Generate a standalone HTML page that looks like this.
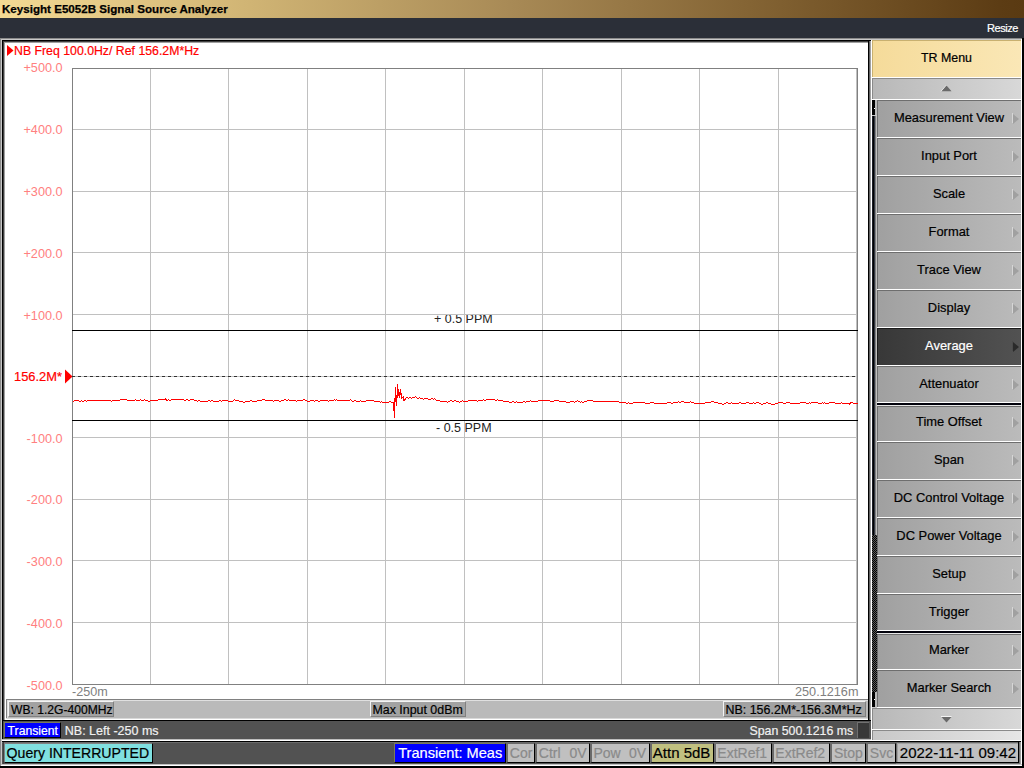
<!DOCTYPE html>
<html><head><meta charset="utf-8">
<style>
*{margin:0;padding:0;box-sizing:border-box}
html,body{width:1024px;height:768px;overflow:hidden;background:#000}
body{position:relative;font-family:"Liberation Sans",sans-serif}
.a{position:absolute}
.t{position:absolute;white-space:pre;line-height:1;font-family:"Liberation Sans",sans-serif;-webkit-text-stroke:0.2px currentColor}
</style></head><body>
<div class="a" style="left:0px;top:0px;width:1024px;height:18px;background:linear-gradient(to right,#f4da94 0%,#d0b474 24.4%,#a88a56 49.8%,#846434 73.2%,#5c3c14 97.6%,#5a3a12 100%);"></div><div class="t" style="left:2px;top:3px;font-size:11.6px;color:#000;font-weight:bold;-webkit-text-stroke:0.25px #000">Keysight E5052B Signal Source Analyzer</div><div class="a" style="left:0px;top:18px;width:1024px;height:20px;background:#2b2f38;"></div><div class="t" style="left:987px;top:23px;font-size:11px;color:#fff;letter-spacing:-0.45px">Resize</div><div class="a" style="left:0px;top:38px;width:1024px;height:730px;background:#000;"></div><div class="a" style="left:0px;top:38px;width:1px;height:728px;background:#8a8a8a;"></div><div class="a" style="left:1px;top:39px;width:1px;height:727px;background:#c8c8c8;"></div><div class="a" style="left:0px;top:38px;width:1022px;height:1px;background:#8a8a8a;"></div><div class="a" style="left:1px;top:39px;width:1021px;height:1px;background:#c8c8c8;"></div><div class="a" style="left:1021px;top:39px;width:1px;height:727px;background:#fff;"></div><div class="a" style="left:1px;top:765px;width:1021px;height:1px;background:#fff;"></div><div class="a" style="left:1px;top:764px;width:1021px;height:1px;background:#c0c0c0;"></div><div class="a" style="left:2px;top:40px;width:867px;height:681px;background:#000;"></div><div class="a" style="left:3px;top:41px;width:866px;height:680px;background:#404040;"></div><div class="a" style="left:4px;top:42px;width:865px;height:679px;background:#a0a0a0;"></div><div class="a" style="left:869px;top:41px;width:1px;height:680px;background:#606060;"></div><div class="a" style="left:870px;top:41px;width:1px;height:680px;background:#a0a0a0;"></div><div class="a" style="left:871px;top:40px;width:1px;height:700px;background:#fff;"></div><div class="a" style="left:5px;top:43px;width:863px;height:677px;background:#fff;"></div><div class="a" style="left:6px;top:699px;width:862px;height:21px;background:#bababa;border-top:1px solid #808080;border-left:1px solid #808080"></div><div class="a" style="left:6px;top:718px;width:862px;height:1px;background:#d8d8d8;"></div><div class="a" style="left:6px;top:719px;width:862px;height:1px;background:#fff;"></div><div class="a" style="left:7px;top:700px;width:861px;height:1px;background:#e0e0e0;"></div><div class="a" style="left:7px;top:700px;width:1px;height:18px;background:#e0e0e0;"></div><div class="a" style="left:8px;top:701px;width:106px;height:16px;background:#a2a2a2;border-top:1px solid #f4f4f4;border-left:1px solid #f4f4f4;border-right:1px solid #808080;border-bottom:1px solid #808080"></div><div class="t" style="left:11px;top:704px;font-size:12.1px;color:#000;">WB: 1.2G-400MHz</div><div class="a" style="left:370px;top:701px;width:96px;height:16px;background:#a2a2a2;border-top:1px solid #f4f4f4;border-left:1px solid #f4f4f4;border-right:1px solid #808080;border-bottom:1px solid #808080"></div><div class="t" style="left:372.5px;top:704px;font-size:12.4px;color:#000;">Max Input 0dBm</div><div class="a" style="left:723px;top:701px;width:143px;height:16px;background:#a2a2a2;border-top:1px solid #f4f4f4;border-left:1px solid #f4f4f4;border-right:1px solid #808080;border-bottom:1px solid #808080"></div><div class="t" style="left:725.5px;top:704px;font-size:12.45px;color:#000;">NB: 156.2M*-156.3M*Hz</div><div class="a" style="left:2px;top:720px;width:869px;height:1px;background:#000;"></div><div class="a" style="left:2px;top:721px;width:869px;height:19px;background:#525252;"></div><div class="a" style="left:2px;top:739px;width:869px;height:1px;background:#bdbdbd;"></div><div class="a" style="left:2px;top:740px;width:1019px;height:1px;background:#fff;"></div><div class="a" style="left:4px;top:722px;width:57px;height:16px;background:#0000ff;border-top:1px solid #7a7a5a;border-left:1px solid #7a7a5a;border-right:1px solid #000;border-bottom:1px solid #000"></div><div class="t" style="left:7.6px;top:725px;font-size:12.2px;color:#fff;">Transient</div><div class="t" style="left:64.8px;top:725px;font-size:12.5px;color:#f0f0f0;">NB: Left -250 ms</div><div class="t" style="left:749.5px;top:725px;font-size:12.35px;color:#f0f0f0;">Span 500.1216 ms</div><div class="a" style="left:857px;top:722px;width:12px;height:16px;background:#383838;border-top:1px solid #707070;border-left:1px solid #707070"></div><div class="a" style="left:2px;top:741px;width:1019px;height:1px;background:#000;"></div><div class="a" style="left:2px;top:742px;width:1019px;height:22px;background:#525252;"></div><div class="a" style="left:2px;top:742px;width:1019px;height:1px;background:#6a6a6a;"></div><div class="a" style="left:3px;top:742px;width:1px;height:22px;background:#404040;"></div><div class="a" style="left:4px;top:743px;width:149px;height:20px;background:#80e0e0;border-top:1px solid #808080;border-left:1px solid #808080;border-right:1px solid #000;border-bottom:1px solid #000"></div><div class="t" style="left:6.6px;top:746px;font-size:14.1px;color:#000;">Query INTERRUPTED</div><div class="a" style="left:394px;top:743px;width:112px;height:20px;background:#0000ff;border-top:1px solid #7a7a5a;border-left:1px solid #7a7a5a;border-right:1px solid #000;border-bottom:1px solid #000"></div><div class="t" style="left:398.2px;top:746px;font-size:14.6px;color:#fff;">Transient: Meas</div><div class="a" style="left:506px;top:743px;width:29px;height:20px;background:#c0c0c0;border-top:1px solid #6a6a6a;border-left:2px solid #6a6a6a;border-right:1px solid #000;border-bottom:1px solid #000"></div><div class="t" style="left:509.8px;top:746px;font-size:14px;color:#8a8a8a;">Cor</div><div class="a" style="left:535px;top:743px;width:55px;height:20px;background:#c0c0c0;border-top:1px solid #6a6a6a;border-left:2px solid #6a6a6a;border-right:1px solid #000;border-bottom:1px solid #000"></div><div class="t" style="left:538.8px;top:746px;font-size:14px;color:#8a8a8a;">Ctrl</div><div class="t" style="left:569.5px;top:746px;font-size:14px;color:#8a8a8a;">0V</div><div class="a" style="left:590px;top:743px;width:60px;height:20px;background:#c0c0c0;border-top:1px solid #6a6a6a;border-left:2px solid #6a6a6a;border-right:1px solid #000;border-bottom:1px solid #000"></div><div class="t" style="left:593.5px;top:746px;font-size:14px;color:#8a8a8a;">Pow</div><div class="t" style="left:629px;top:746px;font-size:14px;color:#8a8a8a;">0V</div><div class="a" style="left:650px;top:743px;width:64px;height:20px;background:#c0c080;border-top:1px solid #6a6a6a;border-left:2px solid #6a6a6a;border-right:1px solid #000;border-bottom:1px solid #000"></div><div class="t" style="left:652.8px;top:745px;font-size:15px;color:#000;">Attn 5dB</div><div class="a" style="left:714px;top:743px;width:58px;height:20px;background:#c0c0c0;border-top:1px solid #6a6a6a;border-left:2px solid #6a6a6a;border-right:1px solid #000;border-bottom:1px solid #000"></div><div class="t" style="left:717.3px;top:746px;font-size:14px;color:#8a8a8a;">ExtRef1</div><div class="a" style="left:772px;top:743px;width:58px;height:20px;background:#c0c0c0;border-top:1px solid #6a6a6a;border-left:2px solid #6a6a6a;border-right:1px solid #000;border-bottom:1px solid #000"></div><div class="t" style="left:775.3px;top:746px;font-size:14px;color:#8a8a8a;">ExtRef2</div><div class="a" style="left:830px;top:743px;width:36px;height:20px;background:#c0c0c0;border-top:1px solid #6a6a6a;border-left:2px solid #6a6a6a;border-right:1px solid #000;border-bottom:1px solid #000"></div><div class="t" style="left:834px;top:746px;font-size:14px;color:#8a8a8a;">Stop</div><div class="a" style="left:866px;top:743px;width:30px;height:20px;background:#c0c0c0;border-top:1px solid #6a6a6a;border-left:2px solid #6a6a6a;border-right:1px solid #000;border-bottom:1px solid #000"></div><div class="t" style="left:869.8px;top:746px;font-size:14px;color:#8a8a8a;">Svc</div><div class="a" style="left:896px;top:742px;width:125px;height:22px;background:#a0a0a0;"></div><div class="a" style="left:896px;top:742px;width:122px;height:1px;background:#6a6a6a;"></div><div class="a" style="left:896px;top:742px;width:1px;height:21px;background:#6a6a6a;"></div><div class="a" style="left:898px;top:744px;width:120px;height:18px;background:#c0c0c0;"></div><div class="a" style="left:1018px;top:742px;width:1px;height:21px;background:#000;"></div><div class="a" style="left:1019px;top:742px;width:1px;height:22px;background:#707070;"></div><div class="a" style="left:896px;top:762px;width:123px;height:1px;background:#000;"></div><div class="a" style="left:896px;top:763px;width:124px;height:1px;background:#707070;"></div><div class="t" style="left:899.8px;top:745px;font-size:15px;color:#000;">2022-11-11 09:42</div><div class="a" style="left:2px;top:40px;width:1px;height:699px;background:#000;"></div><div class="a" style="left:868px;top:40px;width:1px;height:681px;background:#000;"></div><div class="a" style="left:872px;top:40px;width:149px;height:700px;background:#c8c8c8;"></div><div class="a" style="left:872px;top:40px;width:149px;height:37px;background:linear-gradient(to right,#f5db9a,#fae7b6);border-top:1px solid #c8b070;border-left:1px solid #c8b070"></div><div class="t" style="left:921px;top:52px;font-size:12.4px;color:#000;">TR Menu</div><div class="a" style="left:872px;top:77px;width:149px;height:1px;background:#fff;"></div><div class="a" style="left:872px;top:78px;width:149px;height:21px;background:linear-gradient(to right,#b8b8b8,#d8d8d8);border-top:1px solid #8a8a8a;border-left:1px solid #8a8a8a"></div><svg class="a" style="left:0;top:0" width="1024" height="100"><polyline points="941,91.3 946.5,85.2" stroke="#f4f4f4" stroke-width="1" fill="none"/><polygon points="941.5,91.3 946.5,85.6 951.5,91.3" fill="#6a6a6a"/></svg><div class="a" style="left:872px;top:99px;width:149px;height:1px;background:#fff;"></div><div class="a" style="left:872px;top:100px;width:5px;height:607px;background:#c0c0c0;"></div><div class="a" style="left:872px;top:100px;width:3px;height:15px;background:#000;"></div><div class="a" style="left:875px;top:100px;width:2px;height:15px;background:#b8b8b8;"></div><div class="a" style="left:874px;top:108px;width:1px;height:1px;background:#fff;"></div><div class="a" style="left:872px;top:115px;width:5px;height:1px;background:#c8c8c8;"></div><div class="a" style="left:872px;top:116px;width:1px;height:419px;background:#1a1d28;"></div><div class="a" style="left:873px;top:116px;width:1px;height:419px;background:#000;"></div><div class="a" style="left:874px;top:116px;width:1px;height:419px;background:#303540;"></div><div class="a" style="left:875px;top:116px;width:1px;height:419px;background:#808080;"></div><div class="a" style="left:876px;top:116px;width:1px;height:419px;background:#c0c0c0;"></div><div class="a" style="left:872px;top:535px;width:5px;height:157px;background:repeating-conic-gradient(#000 0 25%,#5a5a5a 0 50%) 0 0/2px 2px;"></div><div class="a" style="left:872px;top:692px;width:3px;height:15px;background:#000;"></div><div class="a" style="left:875px;top:692px;width:2px;height:15px;background:#b8b8b8;"></div><div class="a" style="left:874px;top:699px;width:1px;height:1px;background:#fff;"></div><div class="a" style="left:877px;top:100px;width:144px;height:37px;background:linear-gradient(to right,#a0a0a0,#bbbbbb);border-top:1px solid #6e6e6e;border-left:1px solid #6e6e6e"></div><div class="a" style="left:877px;top:137px;width:144px;height:1px;background:#fff;"></div><div class="t" style="left:878px;top:112px;width:142px;text-align:center;font-size:12.9px;color:#000">Measurement View</div><svg class="a" style="left:1000px;top:100px" width="24" height="38"><line x1="12.5" y1="13" x2="12.5" y2="23" stroke="#d6d6d6"/><polygon points="13,14 19,19 13,24" fill="#a0a0a0"/></svg><div class="a" style="left:877px;top:138px;width:144px;height:37px;background:linear-gradient(to right,#a0a0a0,#bbbbbb);border-top:1px solid #6e6e6e;border-left:1px solid #6e6e6e"></div><div class="a" style="left:877px;top:175px;width:144px;height:1px;background:#fff;"></div><div class="t" style="left:878px;top:150px;width:142px;text-align:center;font-size:12.9px;color:#000">Input Port</div><svg class="a" style="left:1000px;top:138px" width="24" height="38"><line x1="12.5" y1="13" x2="12.5" y2="23" stroke="#d6d6d6"/><polygon points="13,14 19,19 13,24" fill="#a0a0a0"/></svg><div class="a" style="left:877px;top:176px;width:144px;height:37px;background:linear-gradient(to right,#a0a0a0,#bbbbbb);border-top:1px solid #6e6e6e;border-left:1px solid #6e6e6e"></div><div class="a" style="left:877px;top:213px;width:144px;height:1px;background:#fff;"></div><div class="t" style="left:878px;top:188px;width:142px;text-align:center;font-size:12.9px;color:#000">Scale</div><svg class="a" style="left:1000px;top:176px" width="24" height="38"><line x1="12.5" y1="13" x2="12.5" y2="23" stroke="#d6d6d6"/><polygon points="13,14 19,19 13,24" fill="#a0a0a0"/></svg><div class="a" style="left:877px;top:214px;width:144px;height:37px;background:linear-gradient(to right,#a0a0a0,#bbbbbb);border-top:1px solid #6e6e6e;border-left:1px solid #6e6e6e"></div><div class="a" style="left:877px;top:251px;width:144px;height:1px;background:#fff;"></div><div class="t" style="left:878px;top:226px;width:142px;text-align:center;font-size:12.9px;color:#000">Format</div><svg class="a" style="left:1000px;top:214px" width="24" height="38"><line x1="12.5" y1="13" x2="12.5" y2="23" stroke="#d6d6d6"/><polygon points="13,14 19,19 13,24" fill="#a0a0a0"/></svg><div class="a" style="left:877px;top:252px;width:144px;height:37px;background:linear-gradient(to right,#a0a0a0,#bbbbbb);border-top:1px solid #6e6e6e;border-left:1px solid #6e6e6e"></div><div class="a" style="left:877px;top:289px;width:144px;height:1px;background:#fff;"></div><div class="t" style="left:878px;top:264px;width:142px;text-align:center;font-size:12.9px;color:#000">Trace View</div><svg class="a" style="left:1000px;top:252px" width="24" height="38"><line x1="12.5" y1="13" x2="12.5" y2="23" stroke="#d6d6d6"/><polygon points="13,14 19,19 13,24" fill="#a0a0a0"/></svg><div class="a" style="left:877px;top:290px;width:144px;height:37px;background:linear-gradient(to right,#a0a0a0,#bbbbbb);border-top:1px solid #6e6e6e;border-left:1px solid #6e6e6e"></div><div class="a" style="left:877px;top:327px;width:144px;height:1px;background:#fff;"></div><div class="t" style="left:878px;top:302px;width:142px;text-align:center;font-size:12.9px;color:#000">Display</div><svg class="a" style="left:1000px;top:290px" width="24" height="38"><line x1="12.5" y1="13" x2="12.5" y2="23" stroke="#d6d6d6"/><polygon points="13,14 19,19 13,24" fill="#a0a0a0"/></svg><div class="a" style="left:877px;top:328px;width:144px;height:37px;background:linear-gradient(to right,#383838,#525252);border-top:1px solid #1a1a1a;border-left:1px solid #1a1a1a"></div><div class="a" style="left:877px;top:365px;width:144px;height:1px;background:#fff;"></div><div class="t" style="left:878px;top:340px;width:142px;text-align:center;font-size:12.9px;color:#fff">Average</div><svg class="a" style="left:1000px;top:328px" width="24" height="38"><line x1="12.5" y1="13" x2="12.5" y2="23" stroke="#4a4a4a"/><polygon points="13,14 19,19 13,24" fill="#2a2a2a"/></svg><div class="a" style="left:877px;top:366px;width:144px;height:37px;background:linear-gradient(to right,#a0a0a0,#bbbbbb);border-top:1px solid #6e6e6e;border-left:1px solid #6e6e6e"></div><div class="a" style="left:877px;top:403px;width:144px;height:1px;background:#fff;"></div><div class="t" style="left:878px;top:378px;width:142px;text-align:center;font-size:12.9px;color:#000">Attenuator</div><svg class="a" style="left:1000px;top:366px" width="24" height="38"><line x1="12.5" y1="13" x2="12.5" y2="23" stroke="#d6d6d6"/><polygon points="13,14 19,19 13,24" fill="#a0a0a0"/></svg><div class="a" style="left:877px;top:404px;width:144px;height:37px;background:linear-gradient(to right,#a0a0a0,#bbbbbb);border-top:1px solid #6e6e6e;border-left:1px solid #6e6e6e"></div><div class="a" style="left:877px;top:441px;width:144px;height:1px;background:#fff;"></div><div class="t" style="left:878px;top:416px;width:142px;text-align:center;font-size:12.9px;color:#000">Time Offset</div><svg class="a" style="left:1000px;top:404px" width="24" height="38"><line x1="12.5" y1="13" x2="12.5" y2="23" stroke="#d6d6d6"/><polygon points="13,14 19,19 13,24" fill="#a0a0a0"/></svg><div class="a" style="left:877px;top:442px;width:144px;height:37px;background:linear-gradient(to right,#a0a0a0,#bbbbbb);border-top:1px solid #6e6e6e;border-left:1px solid #6e6e6e"></div><div class="a" style="left:877px;top:479px;width:144px;height:1px;background:#fff;"></div><div class="t" style="left:878px;top:454px;width:142px;text-align:center;font-size:12.9px;color:#000">Span</div><svg class="a" style="left:1000px;top:442px" width="24" height="38"><line x1="12.5" y1="13" x2="12.5" y2="23" stroke="#d6d6d6"/><polygon points="13,14 19,19 13,24" fill="#a0a0a0"/></svg><div class="a" style="left:877px;top:480px;width:144px;height:37px;background:linear-gradient(to right,#a0a0a0,#bbbbbb);border-top:1px solid #6e6e6e;border-left:1px solid #6e6e6e"></div><div class="a" style="left:877px;top:517px;width:144px;height:1px;background:#fff;"></div><div class="t" style="left:878px;top:492px;width:142px;text-align:center;font-size:12.9px;color:#000">DC Control Voltage</div><svg class="a" style="left:1000px;top:480px" width="24" height="38"><line x1="12.5" y1="13" x2="12.5" y2="23" stroke="#d6d6d6"/><polygon points="13,14 19,19 13,24" fill="#a0a0a0"/></svg><div class="a" style="left:877px;top:518px;width:144px;height:37px;background:linear-gradient(to right,#a0a0a0,#bbbbbb);border-top:1px solid #6e6e6e;border-left:1px solid #6e6e6e"></div><div class="a" style="left:877px;top:555px;width:144px;height:1px;background:#fff;"></div><div class="t" style="left:878px;top:530px;width:142px;text-align:center;font-size:12.9px;color:#000">DC Power Voltage</div><svg class="a" style="left:1000px;top:518px" width="24" height="38"><line x1="12.5" y1="13" x2="12.5" y2="23" stroke="#d6d6d6"/><polygon points="13,14 19,19 13,24" fill="#a0a0a0"/></svg><div class="a" style="left:877px;top:556px;width:144px;height:37px;background:linear-gradient(to right,#a0a0a0,#bbbbbb);border-top:1px solid #6e6e6e;border-left:1px solid #6e6e6e"></div><div class="a" style="left:877px;top:593px;width:144px;height:1px;background:#fff;"></div><div class="t" style="left:878px;top:568px;width:142px;text-align:center;font-size:12.9px;color:#000">Setup</div><svg class="a" style="left:1000px;top:556px" width="24" height="38"><line x1="12.5" y1="13" x2="12.5" y2="23" stroke="#d6d6d6"/><polygon points="13,14 19,19 13,24" fill="#a0a0a0"/></svg><div class="a" style="left:877px;top:594px;width:144px;height:37px;background:linear-gradient(to right,#a0a0a0,#bbbbbb);border-top:1px solid #6e6e6e;border-left:1px solid #6e6e6e"></div><div class="a" style="left:877px;top:631px;width:144px;height:1px;background:#fff;"></div><div class="t" style="left:878px;top:606px;width:142px;text-align:center;font-size:12.9px;color:#000">Trigger</div><svg class="a" style="left:1000px;top:594px" width="24" height="38"><line x1="12.5" y1="13" x2="12.5" y2="23" stroke="#d6d6d6"/><polygon points="13,14 19,19 13,24" fill="#a0a0a0"/></svg><div class="a" style="left:877px;top:632px;width:144px;height:37px;background:linear-gradient(to right,#a0a0a0,#bbbbbb);border-top:1px solid #6e6e6e;border-left:1px solid #6e6e6e"></div><div class="a" style="left:877px;top:669px;width:144px;height:1px;background:#fff;"></div><div class="t" style="left:878px;top:644px;width:142px;text-align:center;font-size:12.9px;color:#000">Marker</div><svg class="a" style="left:1000px;top:632px" width="24" height="38"><line x1="12.5" y1="13" x2="12.5" y2="23" stroke="#d6d6d6"/><polygon points="13,14 19,19 13,24" fill="#a0a0a0"/></svg><div class="a" style="left:877px;top:670px;width:144px;height:37px;background:linear-gradient(to right,#a0a0a0,#bbbbbb);border-top:1px solid #6e6e6e;border-left:1px solid #6e6e6e"></div><div class="a" style="left:877px;top:707px;width:144px;height:1px;background:#fff;"></div><div class="t" style="left:878px;top:682px;width:142px;text-align:center;font-size:12.9px;color:#000">Marker Search</div><svg class="a" style="left:1000px;top:670px" width="24" height="38"><line x1="12.5" y1="13" x2="12.5" y2="23" stroke="#d6d6d6"/><polygon points="13,14 19,19 13,24" fill="#a0a0a0"/></svg><div class="a" style="left:877px;top:402px;width:144px;height:1px;background:#fff;"></div><div class="a" style="left:877px;top:403px;width:144px;height:2px;background:#02020c;"></div><div class="a" style="left:877px;top:405px;width:144px;height:1px;background:#e8e8e8;"></div><div class="a" style="left:877px;top:406px;width:144px;height:1px;background:#6e6e6e;"></div><div class="a" style="left:877px;top:630px;width:144px;height:1px;background:#fff;"></div><div class="a" style="left:877px;top:631px;width:144px;height:2px;background:#02020c;"></div><div class="a" style="left:877px;top:633px;width:144px;height:1px;background:#e8e8e8;"></div><div class="a" style="left:877px;top:634px;width:144px;height:1px;background:#6e6e6e;"></div><div class="a" style="left:872px;top:708px;width:149px;height:21px;background:linear-gradient(to right,#b8b8b8,#d8d8d8);border-top:1px solid #8a8a8a;border-left:1px solid #8a8a8a"></div><svg class="a" style="left:0;top:700px" width="1024" height="40"><line x1="941" y1="16.5" x2="951.5" y2="16.5" stroke="#f4f4f4" stroke-width="1"/><polygon points="941.5,17 946.5,22.6 951.5,17" fill="#6a6a6a"/></svg><div class="a" style="left:872px;top:729px;width:149px;height:1px;background:#fff;"></div><div class="a" style="left:872px;top:730px;width:149px;height:10px;background:linear-gradient(to right,#c8c8c8,#e6e6e6);border-top:1px solid #8a8a8a;border-left:1px solid #8a8a8a"></div><div class="t" style="left:14px;top:45px;font-size:12.3px;color:#ff0000;">NB Freq 100.0Hz/ Ref 156.2M*Hz</div><svg class="a" style="left:0;top:0" width="20" height="60"><polygon points="7,45 13.5,50.5 7,56" fill="#f00"/></svg><div class="t" style="left:0;width:62.6px;text-align:right;top:62px;font-size:12.7px;color:#ff8080;-webkit-text-stroke:0">+500.0</div><div class="t" style="left:0;width:62.6px;text-align:right;top:124px;font-size:12.7px;color:#ff8080;-webkit-text-stroke:0">+400.0</div><div class="t" style="left:0;width:62.6px;text-align:right;top:186px;font-size:12.7px;color:#ff8080;-webkit-text-stroke:0">+300.0</div><div class="t" style="left:0;width:62.6px;text-align:right;top:248px;font-size:12.7px;color:#ff8080;-webkit-text-stroke:0">+200.0</div><div class="t" style="left:0;width:62.6px;text-align:right;top:310px;font-size:12.7px;color:#ff8080;-webkit-text-stroke:0">+100.0</div><div class="t" style="left:0;width:62.6px;text-align:right;top:433px;font-size:12.7px;color:#ff8080;-webkit-text-stroke:0">-100.0</div><div class="t" style="left:0;width:62.6px;text-align:right;top:494px;font-size:12.7px;color:#ff8080;-webkit-text-stroke:0">-200.0</div><div class="t" style="left:0;width:62.6px;text-align:right;top:556px;font-size:12.7px;color:#ff8080;-webkit-text-stroke:0">-300.0</div><div class="t" style="left:0;width:62.6px;text-align:right;top:618px;font-size:12.7px;color:#ff8080;-webkit-text-stroke:0">-400.0</div><div class="t" style="left:0;width:62.6px;text-align:right;top:680px;font-size:12.7px;color:#ff8080;-webkit-text-stroke:0">-500.0</div><div class="t" style="left:0;width:62px;text-align:right;top:371px;font-size:12.9px;color:#ff0000">156.2M*</div><svg class="a" style="left:0;top:0" width="80" height="400"><polygon points="65,369.6 72.6,376.5 65,383.4" fill="#f00"/></svg><div class="t" style="left:72px;top:686px;font-size:12.6px;color:#808080;-webkit-text-stroke:0">-250m</div><div class="t" style="left:795px;top:686px;font-size:12.7px;color:#808080;-webkit-text-stroke:0">250.1216m</div><div class="t" style="left:434px;top:313px;font-size:12.5px;color:#222;-webkit-text-stroke:0">+ 0.5 PPM</div><div class="t" style="left:436px;top:422px;font-size:12.5px;color:#222;-webkit-text-stroke:0">- 0.5 PPM</div>
<svg class="a" style="left:0;top:0" width="1024" height="768" viewBox="0 0 1024 768"><g shape-rendering="crispEdges" fill="none"><line x1="150.5" y1="68" x2="150.5" y2="685" stroke="#c0c0c0"/><line x1="228.5" y1="68" x2="228.5" y2="685" stroke="#c0c0c0"/><line x1="307.5" y1="68" x2="307.5" y2="685" stroke="#c0c0c0"/><line x1="385.5" y1="68" x2="385.5" y2="685" stroke="#c0c0c0"/><line x1="464.5" y1="68" x2="464.5" y2="685" stroke="#c0c0c0"/><line x1="542.5" y1="68" x2="542.5" y2="685" stroke="#c0c0c0"/><line x1="621.5" y1="68" x2="621.5" y2="685" stroke="#c0c0c0"/><line x1="699.5" y1="68" x2="699.5" y2="685" stroke="#c0c0c0"/><line x1="778.5" y1="68" x2="778.5" y2="685" stroke="#c0c0c0"/><line x1="856.5" y1="68" x2="856.5" y2="685" stroke="#c0c0c0"/><line x1="72" y1="129.5" x2="858" y2="129.5" stroke="#c0c0c0"/><line x1="72" y1="191.5" x2="858" y2="191.5" stroke="#c0c0c0"/><line x1="72" y1="252.5" x2="858" y2="252.5" stroke="#c0c0c0"/><line x1="72" y1="314.5" x2="858" y2="314.5" stroke="#c0c0c0"/><line x1="72" y1="376.5" x2="858" y2="376.5" stroke="#c0c0c0"/><line x1="72" y1="437.5" x2="858" y2="437.5" stroke="#c0c0c0"/><line x1="72" y1="499.5" x2="858" y2="499.5" stroke="#c0c0c0"/><line x1="72" y1="560.5" x2="858" y2="560.5" stroke="#c0c0c0"/><line x1="72" y1="622.5" x2="858" y2="622.5" stroke="#c0c0c0"/><rect x="72.5" y="68.5" width="785" height="616" stroke="#808080"/><line x1="72" y1="376.5" x2="858" y2="376.5" stroke="#303030" stroke-dasharray="3 3"/><line x1="72" y1="330.5" x2="858" y2="330.5" stroke="#000"/><line x1="72" y1="420.5" x2="858" y2="420.5" stroke="#000"/></g><path d="M72.5,401.5 L73.5,401.5 L74.5,400.5 L75.5,400.5 L76.5,400.5 L77.5,400.5 L78.5,400.5 L79.5,401.5 L80.5,401.5 L81.5,400.5 L82.5,401.5 L83.5,401.5 L84.5,400.5 L85.5,400.5 L86.5,401.5 L87.5,400.5 L88.5,400.5 L89.5,400.5 L90.5,400.5 L91.5,400.5 L92.5,400.5 L93.5,400.5 L94.5,400.5 L95.5,400.5 L96.5,400.5 L97.5,400.5 L98.5,400.5 L99.5,400.5 L100.5,400.5 L101.5,400.5 L102.5,400.5 L103.5,400.5 L104.5,400.5 L105.5,400.5 L106.5,400.5 L107.5,400.5 L108.5,400.5 L109.5,400.5 L110.5,400.5 L111.5,401.5 L112.5,400.5 L113.5,400.5 L114.5,400.5 L115.5,400.5 L116.5,400.5 L117.5,400.5 L118.5,400.5 L119.5,400.5 L120.5,399.5 L121.5,399.5 L122.5,399.5 L123.5,399.5 L124.5,399.5 L125.5,399.5 L126.5,399.5 L127.5,400.5 L128.5,400.5 L129.5,400.5 L130.5,400.5 L131.5,400.5 L132.5,400.5 L133.5,400.5 L134.5,400.5 L135.5,399.5 L136.5,400.5 L137.5,400.5 L138.5,400.5 L139.5,400.5 L140.5,399.5 L141.5,400.5 L142.5,400.5 L143.5,400.5 L144.5,399.5 L145.5,400.5 L146.5,400.5 L147.5,400.5 L148.5,401.5 L149.5,401.5 L150.5,400.5 L151.5,400.5 L152.5,400.5 L153.5,400.5 L154.5,400.5 L155.5,400.5 L156.5,400.5 L157.5,400.5 L158.5,399.5 L159.5,399.5 L160.5,399.5 L161.5,399.5 L162.5,399.5 L163.5,399.5 L164.5,399.5 L165.5,398.5 L166.5,400.5 L167.5,400.5 L168.5,399.5 L169.5,400.5 L170.5,400.5 L171.5,399.5 L172.5,399.5 L173.5,399.5 L174.5,399.5 L175.5,399.5 L176.5,399.5 L177.5,399.5 L178.5,399.5 L179.5,399.5 L180.5,399.5 L181.5,399.5 L182.5,399.5 L183.5,399.5 L184.5,400.5 L185.5,400.5 L186.5,399.5 L187.5,399.5 L188.5,400.5 L189.5,400.5 L190.5,399.5 L191.5,399.5 L192.5,399.5 L193.5,399.5 L194.5,400.5 L195.5,400.5 L196.5,400.5 L197.5,401.5 L198.5,400.5 L199.5,400.5 L200.5,401.5 L201.5,401.5 L202.5,401.5 L203.5,401.5 L204.5,401.5 L205.5,401.5 L206.5,401.5 L207.5,401.5 L208.5,400.5 L209.5,400.5 L210.5,401.5 L211.5,400.5 L212.5,400.5 L213.5,401.5 L214.5,401.5 L215.5,401.5 L216.5,401.5 L217.5,401.5 L218.5,401.5 L219.5,400.5 L220.5,400.5 L221.5,401.5 L222.5,400.5 L223.5,400.5 L224.5,400.5 L225.5,400.5 L226.5,400.5 L227.5,400.5 L228.5,401.5 L229.5,401.5 L230.5,401.5 L231.5,401.5 L232.5,401.5 L233.5,400.5 L234.5,399.5 L235.5,400.5 L236.5,400.5 L237.5,400.5 L238.5,400.5 L239.5,401.5 L240.5,401.5 L241.5,401.5 L242.5,401.5 L243.5,402.5 L244.5,402.5 L245.5,401.5 L246.5,401.5 L247.5,401.5 L248.5,401.5 L249.5,401.5 L250.5,400.5 L251.5,400.5 L252.5,401.5 L253.5,401.5 L254.5,401.5 L255.5,401.5 L256.5,401.5 L257.5,400.5 L258.5,400.5 L259.5,400.5 L260.5,400.5 L261.5,400.5 L262.5,399.5 L263.5,399.5 L264.5,399.5 L265.5,400.5 L266.5,400.5 L267.5,400.5 L268.5,400.5 L269.5,400.5 L270.5,400.5 L271.5,400.5 L272.5,400.5 L273.5,401.5 L274.5,400.5 L275.5,400.5 L276.5,400.5 L277.5,400.5 L278.5,400.5 L279.5,401.5 L280.5,401.5 L281.5,400.5 L282.5,400.5 L283.5,400.5 L284.5,399.5 L285.5,399.5 L286.5,400.5 L287.5,400.5 L288.5,399.5 L289.5,400.5 L290.5,400.5 L291.5,400.5 L292.5,400.5 L293.5,400.5 L294.5,400.5 L295.5,400.5 L296.5,401.5 L297.5,400.5 L298.5,400.5 L299.5,400.5 L300.5,400.5 L301.5,400.5 L302.5,400.5 L303.5,399.5 L304.5,399.5 L305.5,400.5 L306.5,400.5 L307.5,401.5 L308.5,401.5 L309.5,401.5 L310.5,400.5 L311.5,400.5 L312.5,400.5 L313.5,400.5 L314.5,401.5 L315.5,400.5 L316.5,400.5 L317.5,400.5 L318.5,401.5 L319.5,401.5 L320.5,400.5 L321.5,400.5 L322.5,400.5 L323.5,400.5 L324.5,400.5 L325.5,400.5 L326.5,400.5 L327.5,400.5 L328.5,401.5 L329.5,400.5 L330.5,400.5 L331.5,400.5 L332.5,400.5 L333.5,400.5 L334.5,399.5 L335.5,400.5 L336.5,399.5 L337.5,400.5 L338.5,400.5 L339.5,400.5 L340.5,400.5 L341.5,400.5 L342.5,400.5 L343.5,400.5 L344.5,400.5 L345.5,400.5 L346.5,400.5 L347.5,400.5 L348.5,400.5 L349.5,400.5 L350.5,399.5 L351.5,400.5 L352.5,401.5 L353.5,401.5 L354.5,400.5 L355.5,400.5 L356.5,401.5 L357.5,401.5 L358.5,401.5 L359.5,401.5 L360.5,400.5 L361.5,401.5 L362.5,401.5 L363.5,401.5 L364.5,401.5 L365.5,401.5 L366.5,400.5 L367.5,400.5 L368.5,400.5 L369.5,400.5 L370.5,400.5 L371.5,400.5 L372.5,400.5 L373.5,400.5 L374.5,401.5 L375.5,401.5 L376.5,401.5 L377.5,401.5 L378.5,401.5 L379.5,401.5 L380.5,402.5 L381.5,401.5 L382.5,402.5 L383.5,402.5 L384.5,402.5 L385.5,402.5 L386.5,402.5 L387.5,402.5 L388.5,402.5 L389.5,401.5 L390.5,401.5 L391.5,402.5 L392.5,402.5 L393.5,402.5 L393.5,410.5 L394.5,398.5 L394.5,417.5 L395.5,387.5 L395.5,397.5 L396.5,396.5 L396.5,405.5 L397.5,384.5 L397.5,397.5 L398.5,389.5 L398.5,395.5 L399.5,392.5 L399.5,397.5 L400.5,389.5 L400.5,394.5 L401.5,393.5 L401.5,398.5 L402.5,397.5 L402.5,397.5 L403.5,396.5 L403.5,400.5 L404.5,400.5 L405.5,398.5 L406.5,397.5 L407.5,397.5 L408.5,398.5 L409.5,397.5 L410.5,397.5 L411.5,398.5 L412.5,397.5 L413.5,397.5 L414.5,397.5 L415.5,396.5 L416.5,397.5 L417.5,398.5 L418.5,398.5 L419.5,397.5 L420.5,398.5 L421.5,398.5 L422.5,398.5 L423.5,399.5 L424.5,398.5 L425.5,398.5 L426.5,398.5 L427.5,398.5 L428.5,399.5 L429.5,399.5 L430.5,399.5 L431.5,398.5 L432.5,398.5 L433.5,399.5 L434.5,398.5 L435.5,399.5 L436.5,400.5 L437.5,400.5 L438.5,400.5 L439.5,400.5 L440.5,401.5 L441.5,401.5 L442.5,401.5 L443.5,401.5 L444.5,401.5 L445.5,401.5 L446.5,401.5 L447.5,402.5 L448.5,401.5 L449.5,401.5 L450.5,400.5 L451.5,400.5 L452.5,401.5 L453.5,401.5 L454.5,400.5 L455.5,400.5 L456.5,401.5 L457.5,401.5 L458.5,401.5 L459.5,402.5 L460.5,401.5 L461.5,401.5 L462.5,400.5 L463.5,401.5 L464.5,401.5 L465.5,401.5 L466.5,401.5 L467.5,401.5 L468.5,400.5 L469.5,400.5 L470.5,400.5 L471.5,400.5 L472.5,400.5 L473.5,400.5 L474.5,400.5 L475.5,400.5 L476.5,400.5 L477.5,401.5 L478.5,400.5 L479.5,400.5 L480.5,400.5 L481.5,400.5 L482.5,400.5 L483.5,399.5 L484.5,400.5 L485.5,400.5 L486.5,399.5 L487.5,399.5 L488.5,399.5 L489.5,399.5 L490.5,399.5 L491.5,399.5 L492.5,399.5 L493.5,399.5 L494.5,399.5 L495.5,400.5 L496.5,400.5 L497.5,399.5 L498.5,400.5 L499.5,400.5 L500.5,400.5 L501.5,400.5 L502.5,400.5 L503.5,401.5 L504.5,401.5 L505.5,401.5 L506.5,401.5 L507.5,401.5 L508.5,401.5 L509.5,402.5 L510.5,402.5 L511.5,402.5 L512.5,401.5 L513.5,401.5 L514.5,402.5 L515.5,402.5 L516.5,401.5 L517.5,402.5 L518.5,402.5 L519.5,402.5 L520.5,402.5 L521.5,402.5 L522.5,402.5 L523.5,401.5 L524.5,401.5 L525.5,402.5 L526.5,401.5 L527.5,401.5 L528.5,401.5 L529.5,401.5 L530.5,400.5 L531.5,401.5 L532.5,401.5 L533.5,401.5 L534.5,401.5 L535.5,401.5 L536.5,401.5 L537.5,401.5 L538.5,400.5 L539.5,400.5 L540.5,400.5 L541.5,400.5 L542.5,400.5 L543.5,400.5 L544.5,400.5 L545.5,400.5 L546.5,400.5 L547.5,400.5 L548.5,400.5 L549.5,400.5 L550.5,401.5 L551.5,401.5 L552.5,401.5 L553.5,401.5 L554.5,400.5 L555.5,400.5 L556.5,400.5 L557.5,400.5 L558.5,400.5 L559.5,401.5 L560.5,401.5 L561.5,401.5 L562.5,401.5 L563.5,401.5 L564.5,401.5 L565.5,401.5 L566.5,402.5 L567.5,402.5 L568.5,402.5 L569.5,402.5 L570.5,401.5 L571.5,401.5 L572.5,401.5 L573.5,401.5 L574.5,402.5 L575.5,401.5 L576.5,401.5 L577.5,400.5 L578.5,401.5 L579.5,401.5 L580.5,402.5 L581.5,401.5 L582.5,402.5 L583.5,402.5 L584.5,401.5 L585.5,401.5 L586.5,401.5 L587.5,400.5 L588.5,400.5 L589.5,400.5 L590.5,400.5 L591.5,400.5 L592.5,400.5 L593.5,401.5 L594.5,401.5 L595.5,401.5 L596.5,401.5 L597.5,401.5 L598.5,401.5 L599.5,401.5 L600.5,401.5 L601.5,401.5 L602.5,401.5 L603.5,401.5 L604.5,401.5 L605.5,401.5 L606.5,401.5 L607.5,401.5 L608.5,401.5 L609.5,401.5 L610.5,401.5 L611.5,401.5 L612.5,401.5 L613.5,401.5 L614.5,401.5 L615.5,401.5 L616.5,401.5 L617.5,401.5 L618.5,401.5 L619.5,402.5 L620.5,402.5 L621.5,402.5 L622.5,402.5 L623.5,402.5 L624.5,402.5 L625.5,402.5 L626.5,403.5 L627.5,403.5 L628.5,402.5 L629.5,403.5 L630.5,403.5 L631.5,403.5 L632.5,403.5 L633.5,402.5 L634.5,402.5 L635.5,402.5 L636.5,402.5 L637.5,402.5 L638.5,402.5 L639.5,402.5 L640.5,402.5 L641.5,402.5 L642.5,402.5 L643.5,402.5 L644.5,402.5 L645.5,403.5 L646.5,403.5 L647.5,403.5 L648.5,403.5 L649.5,403.5 L650.5,402.5 L651.5,402.5 L652.5,402.5 L653.5,402.5 L654.5,403.5 L655.5,403.5 L656.5,403.5 L657.5,403.5 L658.5,403.5 L659.5,403.5 L660.5,403.5 L661.5,403.5 L662.5,403.5 L663.5,403.5 L664.5,403.5 L665.5,403.5 L666.5,403.5 L667.5,402.5 L668.5,402.5 L669.5,402.5 L670.5,402.5 L671.5,403.5 L672.5,403.5 L673.5,402.5 L674.5,402.5 L675.5,402.5 L676.5,402.5 L677.5,402.5 L678.5,401.5 L679.5,402.5 L680.5,402.5 L681.5,401.5 L682.5,401.5 L683.5,401.5 L684.5,402.5 L685.5,402.5 L686.5,402.5 L687.5,402.5 L688.5,402.5 L689.5,402.5 L690.5,401.5 L691.5,402.5 L692.5,402.5 L693.5,402.5 L694.5,403.5 L695.5,403.5 L696.5,403.5 L697.5,403.5 L698.5,403.5 L699.5,403.5 L700.5,403.5 L701.5,403.5 L702.5,403.5 L703.5,403.5 L704.5,403.5 L705.5,402.5 L706.5,402.5 L707.5,402.5 L708.5,402.5 L709.5,402.5 L710.5,402.5 L711.5,401.5 L712.5,401.5 L713.5,401.5 L714.5,402.5 L715.5,402.5 L716.5,402.5 L717.5,402.5 L718.5,403.5 L719.5,403.5 L720.5,403.5 L721.5,403.5 L722.5,404.5 L723.5,404.5 L724.5,403.5 L725.5,403.5 L726.5,402.5 L727.5,402.5 L728.5,403.5 L729.5,403.5 L730.5,403.5 L731.5,402.5 L732.5,403.5 L733.5,403.5 L734.5,403.5 L735.5,403.5 L736.5,403.5 L737.5,403.5 L738.5,403.5 L739.5,402.5 L740.5,402.5 L741.5,403.5 L742.5,403.5 L743.5,403.5 L744.5,403.5 L745.5,403.5 L746.5,402.5 L747.5,402.5 L748.5,402.5 L749.5,403.5 L750.5,403.5 L751.5,403.5 L752.5,403.5 L753.5,402.5 L754.5,403.5 L755.5,403.5 L756.5,402.5 L757.5,402.5 L758.5,402.5 L759.5,403.5 L760.5,403.5 L761.5,404.5 L762.5,404.5 L763.5,403.5 L764.5,403.5 L765.5,403.5 L766.5,402.5 L767.5,402.5 L768.5,403.5 L769.5,403.5 L770.5,403.5 L771.5,404.5 L772.5,404.5 L773.5,404.5 L774.5,404.5 L775.5,403.5 L776.5,403.5 L777.5,403.5 L778.5,402.5 L779.5,402.5 L780.5,402.5 L781.5,402.5 L782.5,402.5 L783.5,403.5 L784.5,403.5 L785.5,403.5 L786.5,402.5 L787.5,402.5 L788.5,402.5 L789.5,402.5 L790.5,403.5 L791.5,403.5 L792.5,403.5 L793.5,403.5 L794.5,403.5 L795.5,403.5 L796.5,403.5 L797.5,403.5 L798.5,403.5 L799.5,403.5 L800.5,402.5 L801.5,402.5 L802.5,402.5 L803.5,402.5 L804.5,402.5 L805.5,402.5 L806.5,403.5 L807.5,403.5 L808.5,403.5 L809.5,402.5 L810.5,403.5 L811.5,402.5 L812.5,402.5 L813.5,402.5 L814.5,402.5 L815.5,402.5 L816.5,402.5 L817.5,402.5 L818.5,403.5 L819.5,403.5 L820.5,403.5 L821.5,403.5 L822.5,402.5 L823.5,403.5 L824.5,402.5 L825.5,403.5 L826.5,403.5 L827.5,403.5 L828.5,403.5 L829.5,402.5 L830.5,402.5 L831.5,402.5 L832.5,402.5 L833.5,402.5 L834.5,402.5 L835.5,403.5 L836.5,403.5 L837.5,403.5 L838.5,403.5 L839.5,403.5 L840.5,403.5 L841.5,402.5 L842.5,403.5 L843.5,403.5 L844.5,403.5 L845.5,403.5 L846.5,403.5 L847.5,403.5 L848.5,403.5 L849.5,404.5 L850.5,402.5 L851.5,402.5 L852.5,402.5 L853.5,403.5 L854.5,403.5 L855.5,403.5 L856.5,403.5 L857.5,403.5" fill="none" stroke="#ff0000" stroke-width="1" shape-rendering="crispEdges"/></svg>
</body></html>
